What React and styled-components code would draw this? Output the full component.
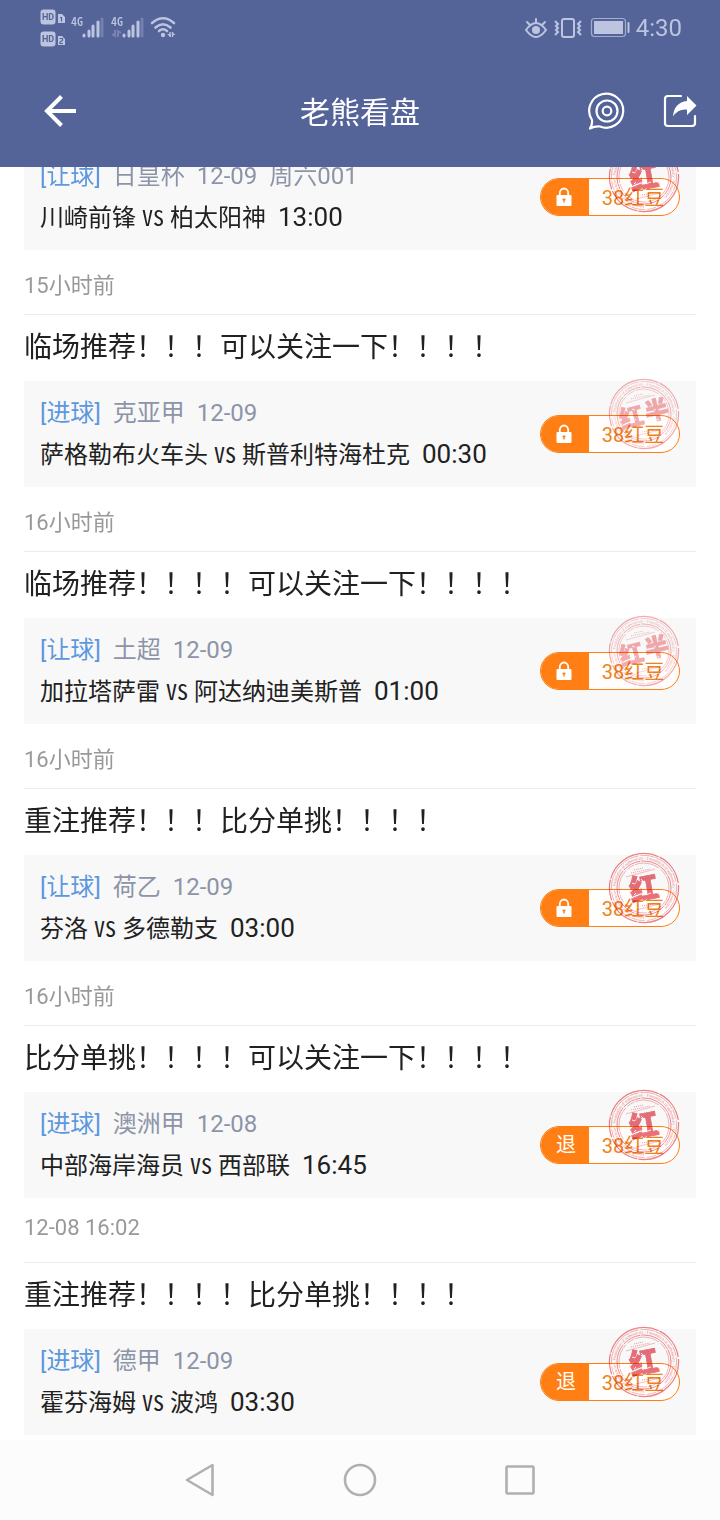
import React, { useId } from "react";
import styled, { createGlobalStyle } from "styled-components";

const GlobalStyle = createGlobalStyle`
  * { box-sizing: border-box; }
  body {
    margin: 0;
    background: #fff;
    color: #212121;
    font-family: Roboto, "Noto Sans CJK SC", sans-serif;
  }
`;

const Page = styled.div`
  min-height: 100vh;
  display: flex;
  flex-direction: column;
`;

const Top = styled.header`
  position: sticky;
  top: 0;
  z-index: 2;
  background: #546499;
  color: #fff;
`;

const StatusBar = styled.div`
  display: flex;
  justify-content: space-between;
  align-items: center;
  height: 56px;
  padding: 0 38px 0 40px;
  color: #bcc4df;
`;

const StatusGroup = styled.div`
  display: flex;
  align-items: center;
  gap: 6px;
  font-size: 24px;
  line-height: 28px;
`;

const NetworkLabels = styled.g`
  font-family: "Noto Sans CJK SC", sans-serif;
  font-feature-settings: "hwid";
  font-size: 12px;
  font-weight: 500;
`;

const TitleBar = styled.div`
  display: grid;
  grid-template-columns: 1fr auto 1fr;
  align-items: center;
  height: 111px;
  padding: 0 20px 0 40px;
`;

const Title = styled.h1`
  margin: 0;
  padding: 2px 20px 0 0;
  font-size: 30px;
  line-height: 40px;
  font-weight: 400;
`;

const Actions = styled.div`
  display: flex;
  justify-content: flex-end;
  gap: 34px;
`;

const IconButton = styled.button`
  display: flex;
  align-items: center;
  justify-content: center;
  width: 40px;
  height: 40px;
  padding: 0;
  border: 0;
  background: none;
  color: inherit;
`;

const Feed = styled.main`
  flex: 1;
  margin-top: -23px;
  padding: 0 24px 5px;
`;

const Post = styled.article`
  & + & {
    border-top: 1px solid #ebebeb;
  }
`;

const PostTitle = styled.h2`
  margin: 0;
  padding: 13px 0;
  font-size: 28px;
  line-height: 40px;
  font-weight: 400;
`;

const Card = styled.div`
  position: relative;
  display: flex;
  justify-content: space-between;
  align-items: center;
  height: 106px;
  padding: 0 16px;
  background: #f8f8f8;
`;

const League = styled.div`
  display: flex;
  gap: 12px;
  font-size: 24px;
  line-height: 40px;
  color: #8d94a8;
`;

const Kind = styled.span`
  color: #5d98df;
`;

const Match = styled.div`
  display: flex;
  align-items: baseline;
  font-size: 24px;
  line-height: 42px;
`;

const Versus = styled.span`
  width: 34px;
  text-align: center;
  font-family: "Noto Sans CJK SC", sans-serif;
  font-feature-settings: "hwid";
  font-size: 22px;
  line-height: 22px;
`;

const Kickoff = styled.time`
  margin-left: 12px;
  font-size: 26px;
`;

const Price = styled.button`
  display: flex;
  width: 140px;
  height: 38px;
  padding: 0;
  overflow: hidden;
  border: 1px solid #ff7f14;
  border-radius: 19px;
  background: #fffefc;
  font-family: inherit;
  font-size: 20px;
  line-height: 38px;
  color: #ec8420;
`;

const PriceTag = styled.span`
  display: flex;
  align-items: center;
  justify-content: center;
  width: 48px;
  height: 36px;
  padding-left: ${(p) => (p.$refund ? "2px" : "0")};
  background: #ff7f14;
  color: #fff;
`;

const PriceText = styled.span`
  flex: 1;
  padding-right: 2px;
  text-align: center;
`;

const StampArt = styled.svg`
  position: absolute;
  top: -6px;
  right: 12px;
  pointer-events: none;
  mix-blend-mode: multiply;
  font-family: "Noto Sans CJK SC", sans-serif;
`;

const Posted = styled.time`
  display: block;
  height: 64px;
  padding-top: 17px;
  font-size: 22px;
  color: #999;
`;

const BottomNav = styled.nav`
  position: sticky;
  bottom: 0;
  z-index: 2;
  display: flex;
  justify-content: center;
  height: 80px;
  background: #fcfcfc;
`;

const NavButton = styled.button`
  display: flex;
  align-items: center;
  justify-content: center;
  width: 160px;
  padding: 0;
  border: 0;
  background: none;
  color: #b0b0b0;
`;

function SignalArt() {
  const bars = (x) => (
    <g stroke="currentColor" strokeWidth="3" strokeLinecap="round">
      <path d={`M${x} 35v1M${x + 5} 31v5M${x + 9} 26v10M${x + 14} 22v14`} />
      <path d={`M${x + 18} 19v17`} opacity=".3" />
    </g>
  );
  return (
    <svg width="137" height="56" viewBox="0 0 137 56" fill="none" fontFamily="Roboto, sans-serif">
      <rect x="0.500" y="9.500" width="15" height="15" rx="3" fill="currentColor" />
      <rect x="0.500" y="31.500" width="15" height="15" rx="3" fill="currentColor" />
      <g fill="#546499" fontSize="9" fontWeight="700" textAnchor="middle">
        <text x="8" y="20">HD</text>
        <text x="8" y="42">HD</text>
      </g>
      <path d="M18 14h4l3 3v6h-7zM18 36h4l3 3v6h-7z" fill="currentColor" />
      <g stroke="#546499" strokeWidth="1.200">
        <path d="M20 17.500h1.500v4" />
        <path d="M19.500 38.500h3v2l-2.500 1.500v1.500h3" />
      </g>
      <NetworkLabels fill="currentColor">
        <text x="31" y="26">4G</text>
        <text x="71" y="26">4G</text>
      </NetworkLabels>
      {bars(44)}
      {bars(84)}
      <path d="M75 30v6l-3-2M78 37v-6l3 2" stroke="currentColor" strokeWidth="2" opacity=".35" />
      <g stroke="currentColor" strokeWidth="2.600" strokeLinecap="round">
        <path d="M112 23Q123 13.500 134 23M115.500 27.500Q123 21 130.500 27.500M119 31Q123 27.500 127 31" />
      </g>
      <circle cx="123" cy="35" r="2.200" fill="currentColor" />
      <path d="M130 32v5M132.500 32v5" stroke="currentColor" strokeWidth="1.400" />
      <path d="M130.500 37l-3.500-3h3.500zM132 32l3.500 3H132z" fill="currentColor" />
    </svg>
  );
}

function DeviceArt() {
  return (
    <svg width="105" height="28" viewBox="0 0 105 28" fill="none" stroke="currentColor">
      <g strokeWidth="2" strokeLinecap="round">
        <path d="M1 16Q6 9 11 9T21 16Q16 23 11 23T1 16Z" />
        <path d="M11 5v4M2 8l3 3M20 8l-3 3" />
      </g>
      <circle cx="11" cy="16" r="4" fill="currentColor" stroke="none" />
      <rect x="37" y="5" width="12" height="18" rx="2" strokeWidth="2" />
      <path d="M30 7l3 3-2 2 2 2-2 2 2 2-3 3M56 7l-3 3 2 2-2 2 2 2-2 2 3 3" strokeWidth="2" />
      <rect x="66.500" y="4.500" width="34" height="18" rx="3" strokeWidth="1.200" opacity=".75" />
      <rect x="69" y="7" width="29" height="13" fill="currentColor" stroke="none" />
      <path d="M103.500 9v9" strokeWidth="2" strokeLinecap="round" />
    </svg>
  );
}

function Stamp({ half }) {
  const id = useId();
  return (
    <StampArt width="80" height="80" viewBox="0 0 80 80" opacity={half ? 0.6 : 0.9} aria-hidden="true">
      <defs>
        <path id={id} d="M40 67.500A28.500 28.500 0 1 1 40.100 67.500" />
      </defs>
      <g fill="none" stroke="#ee7379">
        <circle cx="40" cy="39" r="34.600" strokeWidth="1.200" strokeDasharray="60 1 33 2 21 1" />
        <circle cx="40" cy="39" r="32.600" strokeWidth=".6" strokeDasharray="14 1 23 1 9 2" />
        <circle cx="40" cy="39" r="27" strokeWidth=".9" strokeDasharray="19 1 31 1" />
        <circle cx="40" cy="39" r="25" strokeWidth=".6" strokeDasharray="25 2 8 1" />
        <path d="M22 28l29-8M32 61l24-6" strokeWidth=".5" />
        <path d="M30 21l9-2M27 24l19-4M38 57l12-2" strokeWidth=".8" strokeDasharray="1 1" />
      </g>
      <text fontFamily="Liberation Serif, serif" fontSize="4" fill="#ee7379">
        <textPath href={`#${id}`}>
          Foundation of authenticity  ·  Foundation of authenticity  ·  Foundation of authenticity  ·  Foundation
        </textPath>
      </text>
      {half ? (
        <g fill="#ee7379" stroke="#ee7379" strokeWidth=".6" fontWeight="900" fontSize="24" textAnchor="middle" transform="rotate(-14 40 39)">
          <text x="27" y="48">红</text>
          <text x="53" y="47">半</text>
        </g>
      ) : (
        <text x="40" y="50" fill="#e8606a" stroke="#e8606a" strokeWidth=".8" fontWeight="900" fontSize="29" textAnchor="middle" transform="rotate(-10 40 39)">
          红
        </text>
      )}
      <path
        d="M28 34l3 1M37 30l2 2M44 45l3-1M30 46l2-2M50 34l2 1M35 40l2 1M53 44l2 1M24 41l2 1M58 33l2 1M41 52l2-2"
        stroke="#f8f8f8"
        strokeWidth="1"
      />
    </StampArt>
  );
}

function Lock() {
  return (
    <svg width="18" height="20" viewBox="0 0 18 20" aria-hidden="true">
      <path d="M3.800 9V6a4.200 4.500 0 0 1 8.400 0v3" fill="none" stroke="#fff" strokeWidth="1.800" />
      <rect x="0.500" y="8" width="15" height="11" rx="1" fill="#fff" />
      <path d="M8 11.500v4M6.500 12.500h3" stroke="#ff7f14" strokeWidth="1.400" />
    </svg>
  );
}

const posts = [
  { kind: "让球", info: ["日皇杯", "12-09", "周六001"], home: "川崎前锋", away: "柏太阳神", kickoff: "13:00", posted: "15小时前" },
  { title: "临场推荐！！！可以关注一下！！！！", kind: "进球", info: ["克亚甲", "12-09"], home: "萨格勒布火车头", away: "斯普利特海杜克", kickoff: "00:30", half: true, posted: "16小时前" },
  { title: "临场推荐！！！！可以关注一下！！！！", kind: "让球", info: ["土超", "12-09"], home: "加拉塔萨雷", away: "阿达纳迪美斯普", kickoff: "01:00", half: true, posted: "16小时前" },
  { title: "重注推荐！！！比分单挑！！！！", kind: "让球", info: ["荷乙", "12-09"], home: "芬洛", away: "多德勒支", kickoff: "03:00", posted: "16小时前" },
  { title: "比分单挑！！！！可以关注一下！！！！", kind: "进球", info: ["澳洲甲", "12-08"], home: "中部海岸海员", away: "西部联", kickoff: "16:45", refund: true, posted: "12-08 16:02" },
  { title: "重注推荐！！！！比分单挑！！！！", kind: "进球", info: ["德甲", "12-09"], home: "霍芬海姆", away: "波鸿", kickoff: "03:30", refund: true },
];

export default function App() {
  return (
    <Page>
      <GlobalStyle />
      <Top>
        <StatusBar>
          <SignalArt />
          <StatusGroup>
            <DeviceArt />
            <span>4:30</span>
          </StatusGroup>
        </StatusBar>
        <TitleBar>
          <IconButton aria-label="返回">
            <svg width="40" height="40" viewBox="0 0 40 40" fill="none" stroke="currentColor" strokeWidth="4">
              <path d="M36 19H7M21.500 4.500L7 19l14.500 14.500" />
            </svg>
          </IconButton>
          <Title>老熊看盘</Title>
          <Actions>
            <IconButton aria-label="消息">
              <svg width="40" height="40" viewBox="0 0 40 40" fill="none" stroke="currentColor" strokeWidth="2.200">
                <path d="M6 28A17 17 0 1 1 14 34.500Q9 34 4 36.500Q6.500 33 6 28Z" strokeLinejoin="round" />
                <circle cx="21" cy="19" r="10.500" />
                <circle cx="21" cy="19" r="4.300" />
              </svg>
            </IconButton>
            <IconButton aria-label="分享">
              <svg width="40" height="40" viewBox="0 0 40 40" fill="none" stroke="currentColor" strokeWidth="2.200">
                <path d="M21 4H8a3 3 0 0 0-3 3v24a3 3 0 0 0 3 3h24a3 3 0 0 0 3-3V24" strokeLinecap="round" />
                <path d="M27 4l9.500 9.500-9.500 9.500v-5.500q-9-1-14 7 1-14 14-15.500z" fill="currentColor" stroke="none" />
              </svg>
            </IconButton>
          </Actions>
        </TitleBar>
      </Top>
      <Feed>
        {posts.map((p, i) => (
          <Post key={i}>
            {p.title && <PostTitle>{p.title}</PostTitle>}
            <Card>
              <div>
                <League>
                  <Kind>[{p.kind}]</Kind>
                  {p.info.map((t) => (
                    <span key={t}>{t}</span>
                  ))}
                </League>
                <Match>
                  <span>{p.home}</span>
                  <Versus>VS</Versus>
                  <span>{p.away}</span>
                  <Kickoff>{p.kickoff}</Kickoff>
                </Match>
              </div>
              <Price>
                <PriceTag $refund={p.refund}>{p.refund ? "退" : <Lock />}</PriceTag>
                <PriceText>38红豆</PriceText>
              </Price>
              <Stamp half={p.half} />
            </Card>
            {p.posted && <Posted>{p.posted}</Posted>}
          </Post>
        ))}
      </Feed>
      <BottomNav>
        <NavButton aria-label="返回">
          <svg width="36" height="36" viewBox="0 0 36 36" fill="none" stroke="currentColor" strokeWidth="2.600" strokeLinejoin="round">
            <path d="M30.500 3v30L5 18z" />
          </svg>
        </NavButton>
        <NavButton aria-label="主页">
          <svg width="36" height="36" viewBox="0 0 36 36" fill="none" stroke="currentColor" strokeWidth="2.600">
            <circle cx="18" cy="18" r="15" />
          </svg>
        </NavButton>
        <NavButton aria-label="最近">
          <svg width="36" height="36" viewBox="0 0 36 36" fill="none" stroke="currentColor" strokeWidth="2.600">
            <rect x="4.500" y="4.500" width="27" height="27" rx="1" />
          </svg>
        </NavButton>
      </BottomNav>
    </Page>
  );
}
